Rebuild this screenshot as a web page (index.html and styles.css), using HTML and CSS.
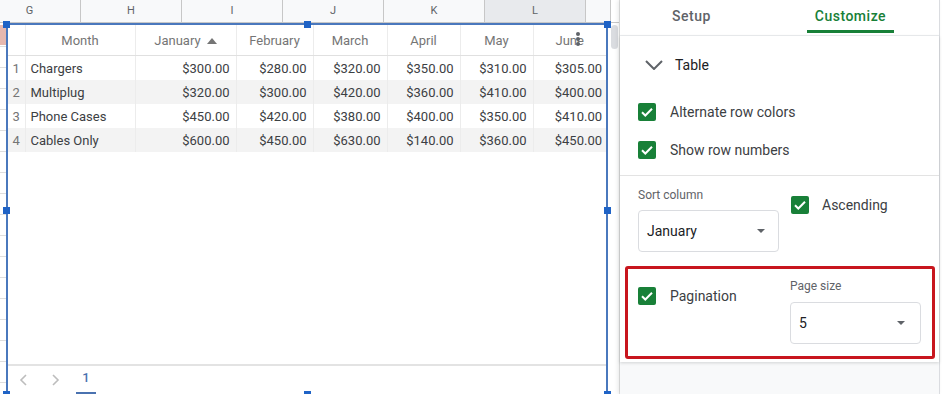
FILE: index.html
```html
<!DOCTYPE html>
<html lang="en">
<head>
  <meta charset="UTF-8" />
  <title>Chart editor - Table</title>
  <link rel="stylesheet" href="styles.css">
</head>
<body>
  <div class="app">
    <div class="sheet">
      <div class="col-head">
        <div class="col first">G</div>
        <div class="col">H</div>
        <div class="col">I</div>
        <div class="col">J</div>
        <div class="col">K</div>
        <div class="col active">L</div>
        <div class="col last"></div>
      </div>

      <div class="grid">
        <div class="row-strip"></div>

        <div class="chart">
          <span class="handle tl"></span>
          <span class="handle tm"></span>
          <span class="handle tr"></span>
          <span class="handle ml"></span>
          <span class="handle mr"></span>
          <span class="handle bl"></span>
          <span class="handle bm"></span>
          <span class="handle br"></span>

          <div class="chart-body">
            <table class="data">
              <colgroup>
                <col class="c-num"><col class="c-month"><col class="c-jan"><col class="c-feb">
                <col class="c-mar"><col class="c-apr"><col class="c-may"><col class="c-jun">
              </colgroup>
              <thead>
                <tr>
                  <th></th>
                  <th>Month</th>
                  <th>January <span class="sort-up"></span></th>
                  <th>February</th>
                  <th>March</th>
                  <th>April</th>
                  <th>May</th>
                  <th class="jun">June<span class="dots"></span></th>
                </tr>
              </thead>
              <tbody>
                <tr>
                  <td class="num">1</td><td class="txt">Chargers</td>
                  <td>$300.00</td><td>$280.00</td><td>$320.00</td><td>$350.00</td><td>$310.00</td><td>$305.00</td>
                </tr>
                <tr>
                  <td class="num">2</td><td class="txt">Multiplug</td>
                  <td>$320.00</td><td>$300.00</td><td>$420.00</td><td>$360.00</td><td>$410.00</td><td>$400.00</td>
                </tr>
                <tr>
                  <td class="num">3</td><td class="txt">Phone Cases</td>
                  <td>$450.00</td><td>$420.00</td><td>$380.00</td><td>$400.00</td><td>$350.00</td><td>$410.00</td>
                </tr>
                <tr>
                  <td class="num">4</td><td class="txt">Cables Only</td>
                  <td>$600.00</td><td>$450.00</td><td>$630.00</td><td>$140.00</td><td>$360.00</td><td>$450.00</td>
                </tr>
              </tbody>
            </table>
          </div>

          <div class="pager">
            <svg width="8" height="12" viewBox="0 0 8 12"><polyline points="7,1 2,6 7,11" fill="none" stroke="#bdbdbd" stroke-width="1.6"/></svg>
            <svg width="8" height="12" viewBox="0 0 8 12"><polyline points="1,1 6,6 1,11" fill="none" stroke="#bdbdbd" stroke-width="1.6"/></svg>
            <span class="page current">1</span>
          </div>
        </div>

        <div class="vscroll"><div class="thumb"></div></div>
      </div>
    </div>

    <div class="panel">
      <div class="editor">
        <div class="tabs">
          <div class="tab">Setup</div>
          <div class="tab on">Customize</div>
        </div>

        <div class="card">
          <div class="sec-head">
            <svg width="18" height="10" viewBox="0 0 18 10"><polyline points="1,1 9,9 17,1" fill="none" stroke="#5f6368" stroke-width="2"/></svg>
            <span>Table</span>
          </div>

          <div class="checks">
            <label class="check">
              <svg class="box" width="18" height="18" viewBox="0 0 18 18"><rect width="18" height="18" rx="2" fill="#188038"/><path d="M4 9.3l3.3 3.2L14 5.8" fill="none" stroke="#fff" stroke-width="2"/></svg>
              Alternate row colors
            </label>
            <label class="check">
              <svg class="box" width="18" height="18" viewBox="0 0 18 18"><rect width="18" height="18" rx="2" fill="#188038"/><path d="M4 9.3l3.3 3.2L14 5.8" fill="none" stroke="#fff" stroke-width="2"/></svg>
              Show row numbers
            </label>
          </div>

          <div class="sort">
            <div class="field sort-col">
              <div class="small">Sort column</div>
              <div class="select">January <span class="caret"></span></div>
            </div>
            <label class="check asc">
              <svg class="box" width="18" height="18" viewBox="0 0 18 18"><rect width="18" height="18" rx="2" fill="#188038"/><path d="M4 9.3l3.3 3.2L14 5.8" fill="none" stroke="#fff" stroke-width="2"/></svg>
              Ascending
            </label>
          </div>

          <div class="pg-opt">
            <label class="check pg-check">
              <svg class="box" width="18" height="18" viewBox="0 0 18 18"><rect width="18" height="18" rx="2" fill="#188038"/><path d="M4 9.3l3.3 3.2L14 5.8" fill="none" stroke="#fff" stroke-width="2"/></svg>
              Pagination
            </label>
            <div class="field page-size">
              <div class="small">Page size</div>
              <div class="select">5 <span class="caret"></span></div>
            </div>
          </div>
        </div>
      </div>
    </div>
  </div>
</body>
</html>
```

FILE: styles.css
```css
body {
  margin: 0;
  font-family: Roboto, "Noto Sans", sans-serif;
  background: #fff;
}
.app {
  display: flex;
  height: 394px;
  overflow: hidden;
}

/* sheet */
.sheet {
  width: 620px;
  flex-shrink: 0;
  box-sizing: border-box;
  border-right: 1px solid #e3e3e3;
}
.col-head {
  display: flex;
  height: 23px;
  box-sizing: border-box;
  border-bottom: 1px solid #c7c7c7;
}
.col {
  width: 101px;
  box-sizing: border-box;
  border-right: 1px solid #c7c7c7;
  background: #f8f9fa;
  color: #5f6368;
  font-size: 11px;
  line-height: 22px;
  text-align: center;
}
.col.first {
  width: 81px;
  padding-right: 21px;
}
.col.active { background: #e8eaed; }
.col.last { width: 25px; }

.grid {
  display: flex;
  height: 371px;
}
.row-strip {
  width: 6px;
  flex-shrink: 0;
  background:
    linear-gradient(#e6b8af, #e6b8af) 0 2px / 6px 20px no-repeat,
    repeating-linear-gradient(to bottom, transparent 0 20px, #dedede 20px 21px) 0 3px;
}
.chart {
  position: relative;
  flex-shrink: 0;
  width: 602px;
  height: 373px;
  box-sizing: border-box;
  border: 2px solid #4a78bd;
  display: flex;
  flex-direction: column;
  background: #fff;
}
.handle {
  position: absolute;
  width: 7px;
  height: 7px;
  background: #1f63c6;
  z-index: 2;
}
.handle.tl { left: -5px; top: -4px; }
.handle.tm { left: calc(50% - 3px); top: -4px; }
.handle.tr { right: -5px; top: -4px; }
.handle.ml { left: -5px; top: calc(50% - 3px); }
.handle.mr { right: -5px; top: calc(50% - 3px); }
.handle.bl { left: -5px; bottom: -4px; }
.handle.bm { left: calc(50% - 3px); bottom: -4px; }
.handle.br { right: -5px; bottom: -4px; }

.chart-body { flex: 1; }
.data {
  border-collapse: collapse;
  table-layout: fixed;
  width: 598px;
  font-size: 13px;
  color: #3c4043;
}
.c-num { width: 17px; }
.c-month { width: 110px; }
.c-jan { width: 101px; }
.c-feb { width: 77px; }
.c-mar { width: 74px; }
.c-apr { width: 73px; }
.c-may { width: 73px; }
.c-jun { width: 73px; }
.data th {
  height: 30px;
  padding: 0;
  font-weight: normal;
  color: #757575;
  text-align: center;
  border-bottom: 1px solid #e0e0e0;
  border-right: 1px solid #ececec;
  white-space: nowrap;
}
.data td {
  height: 24px;
  padding: 0 6px 0 0;
  text-align: right;
  border-right: 1px solid #ececec;
  white-space: nowrap;
}
.data th:last-child, .data td:last-child { border-right: none; }
.data td:last-child { padding-right: 4px; }
.data td.num {
  padding: 0;
  text-align: center;
  color: #757575;
}
.data td.txt {
  padding-left: 5px;
  text-align: left;
}
.data tbody tr:nth-child(even) { background: #f3f3f3; }
.sort-up {
  display: inline-block;
  margin-left: 3px;
  border-left: 5.5px solid transparent;
  border-right: 5.5px solid transparent;
  border-bottom: 6px solid #757575;
  vertical-align: 1px;
}
.data th.jun { position: relative; }
.dots {
  position: absolute;
  right: 26px;
  top: 12px;
  width: 4px;
  height: 4px;
  border-radius: 50%;
  background: #5f6368;
  box-shadow: 0 -5px 0 #5f6368, 0 5px 0 #5f6368;
}

.pager {
  height: 30px;
  box-sizing: border-box;
  border-top: 2px solid #e3e3e3;
  display: flex;
  align-items: center;
  padding-left: 11px;
}
.pager svg + svg { margin-left: 25px; }
.page {
  align-self: stretch;
  width: 20px;
  margin-left: 16px;
  box-sizing: border-box;
  padding-top: 4px;
  text-align: center;
  font-size: 13px;
  font-weight: 500;
  color: #4a72b0;
}
.page.current { border-bottom: 2px solid #4a72b0; }

.vscroll {
  width: 11px;
  flex-shrink: 0;
}
.thumb {
  width: 7px;
  height: 24px;
  margin: 2px 0 0 3px;
  border-radius: 4px;
  background: #dadce0;
}

/* chart editor panel */
.panel {
  width: 323px;
  flex-shrink: 0;
  background: #fff;
}
.editor {
  width: 320px;
  height: 100%;
  box-sizing: border-box;
  border-right: 1px solid #dadce0;
  background: #f8f9fa;
  box-shadow: -2px 0 4px rgba(60, 64, 67, 0.12);
}
.tabs {
  display: flex;
  align-items: flex-start;
  gap: 88px;
  height: 36px;
  box-sizing: border-box;
  padding-left: 44px;
  background: #fff;
  border-bottom: 1px solid #eceef0;
}
.tab {
  height: 33px;
  box-sizing: border-box;
  padding: 3px 8px 0;
  line-height: 27px;
  font-size: 14px;
  font-weight: 500;
  letter-spacing: 0.5px;
  color: #5f6368;
}
.tab.on {
  color: #188038;
  border-bottom: 3px solid #188038;
}
.card {
  background: #fff;
  padding-bottom: 3px;
  box-shadow: 0 1px 3px rgba(60, 64, 67, 0.2);
}
.sec-head {
  display: flex;
  align-items: center;
  gap: 12px;
  height: 57px;
  padding-left: 25px;
  font-size: 14px;
  color: #202124;
}
.checks {
  padding-bottom: 6px;
  border-bottom: 1px solid #e3e3e3;
}
.check {
  display: flex;
  align-items: center;
  gap: 14px;
  font-size: 14px;
  color: #3c4043;
}
.checks .check {
  height: 38px;
  padding-left: 18px;
}
.box { flex-shrink: 0; }

.sort {
  display: flex;
  align-items: flex-start;
  padding: 11px 0 0 18px;
}
.small {
  font-size: 12px;
  line-height: 16px;
  color: #5f6368;
}
.select {
  display: flex;
  align-items: center;
  justify-content: space-between;
  height: 42px;
  box-sizing: border-box;
  margin-top: 7px;
  padding: 0 13px 0 8px;
  border: 1px solid #dadce0;
  border-radius: 4px;
  font-size: 14px;
  color: #202124;
}
.sort-col { width: 141px; }
.asc {
  height: 18px;
  margin: 9px 0 0 12px;
  gap: 13px;
}
.caret {
  border-left: 4px solid transparent;
  border-right: 4px solid transparent;
  border-top: 4px solid #5f6368;
}

.pg-opt {
  display: flex;
  align-items: flex-start;
  height: 93px;
  box-sizing: border-box;
  width: 310px;
  margin: 14px 0 0 5px;
  padding: 9px 0 0 10px;
  border: 3px solid #c8161e;
  border-radius: 3px;
}
.pg-check {
  width: 152px;
  height: 18px;
  margin-top: 9px;
}
.page-size { width: 131px; }
.page-size .select { margin-top: 8px; padding-right: 15px; }
```
